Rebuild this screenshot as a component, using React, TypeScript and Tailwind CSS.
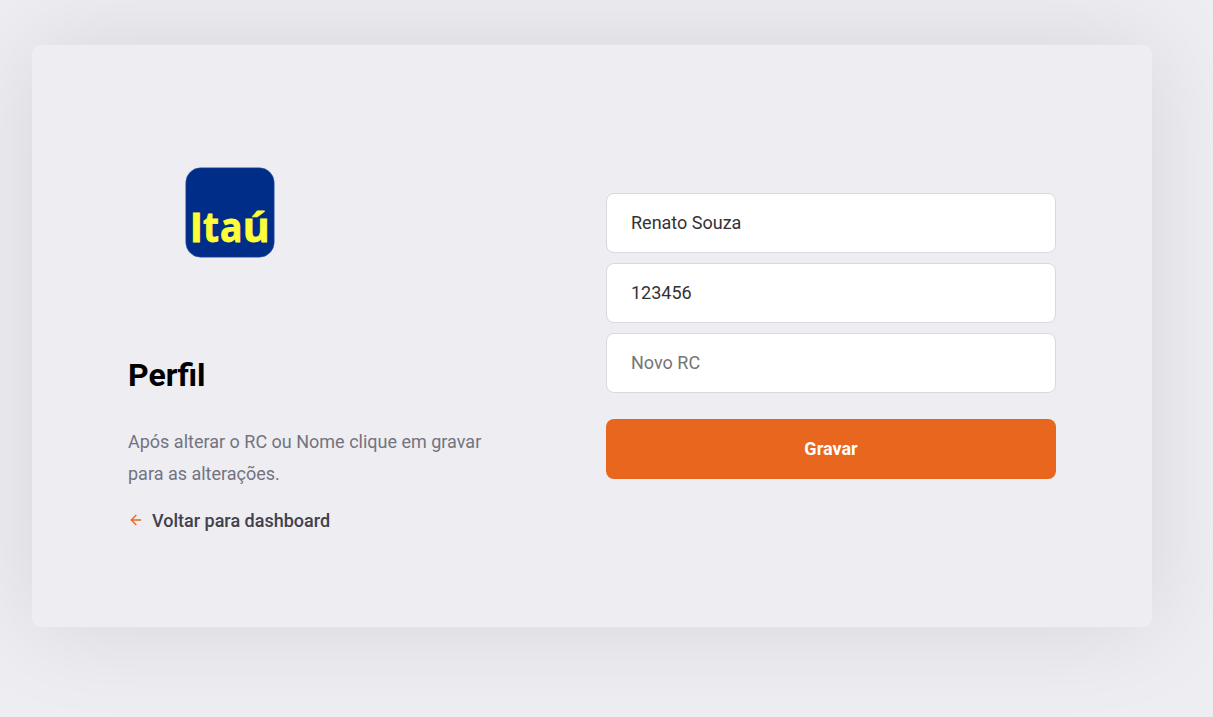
import React from "react";
import { FiArrowLeft } from "react-icons/fi";

function Logo() {
  return (
    <svg width="204" height="204" viewBox="0 0 204 204" role="img" aria-label="Itaú">
      <rect x="57.75" y="56.75" width="88.5" height="89.5" rx="15" fill="#002d87" stroke="#4b66ad" strokeWidth="0.5" />
      <g fill="#ffff38" stroke="#ffff38" strokeWidth="0.8" fontSize="40.5">
        <text x="62.2" y="130.6" fontFamily="Lato, sans-serif" fontWeight="900">I</text>
        <text y="130.6" fontFamily="'Open Sans', sans-serif" fontWeight="700">
          <tspan x="75" textLength="16" lengthAdjust="spacingAndGlyphs">t</tspan>
          <tspan x="92" textLength="22.5" lengthAdjust="spacingAndGlyphs">a</tspan>
          <tspan x="114.8" textLength="27" lengthAdjust="spacingAndGlyphs">ú</tspan>
        </text>
      </g>
    </svg>
  );
}

const field =
  "h-[60px] w-full rounded-lg border border-[#d8d8e2] bg-white px-6 pb-0.5 text-[18px] text-[#333333] outline-none placeholder:text-[#757575]";

export default function App() {
  return (
    <div className="flex h-[717px] w-full items-start overflow-hidden bg-[#eeedf2] pl-8 pt-[45px] font-['Roboto',sans-serif] text-[18px]">
      <main className="flex h-[582px] w-[1120px] shrink-0 items-center justify-between rounded-lg bg-[#eeedf2] px-24 shadow-[0_0_100px_rgba(0,0,0,0.1)]">
        <section className="flex h-[390px] w-[380px] flex-col">
          <div className="-mt-[30px] h-[204px]"><Logo /></div>
          <h1 className="mt-[42px] text-[32px] font-bold leading-[37px] text-black">Perfil</h1>
          <p className="mt-8 whitespace-nowrap leading-8 text-[#737380]">
            Após alterar o RC ou Nome clique em gravar
            <br />
            para as alterações.
          </p>
          <a href="#" className="mt-5 flex items-center font-medium leading-[21px] text-[#41414d]">
            <FiArrowLeft size={16} color="#e8661e" className="mb-0.5 mr-2" />
            Voltar para dashboard
          </a>
        </section>
        <form className="flex w-[450px] flex-col">
          <input className={field} defaultValue="Renato Souza" />
          <input className={field + " mt-[10px]"} defaultValue="123456" />
          <input className={field + " mt-[10px]"} placeholder="Novo RC" />
          <button type="button" className="mt-[26px] h-[60px] rounded-lg bg-[#e8661e] pb-0.5 font-bold text-white">Gravar</button>
        </form>
      </main>
    </div>
  );
}
